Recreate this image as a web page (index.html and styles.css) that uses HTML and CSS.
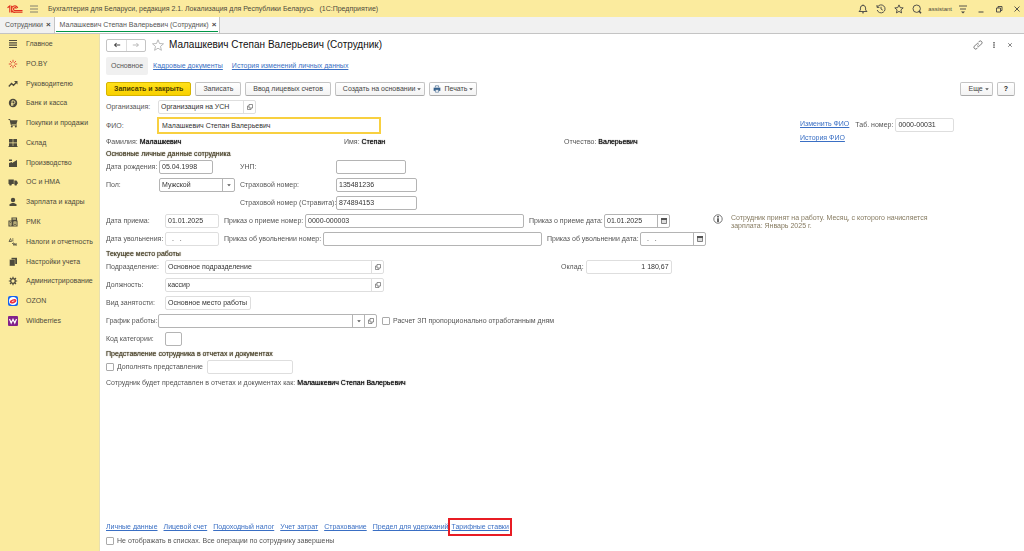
FILE: index.html
```html
<!DOCTYPE html>
<html lang="ru">
<head>
    <meta charset="utf-8" />
    <title>Бухгалтерия для Беларуси</title>
    <link rel="stylesheet" href="styles.css">
</head>
<body>
    <!-- общие иконки -->
    <svg class="sprite" aria-hidden="true">
        <symbol id="open" viewBox="0 0 8 8"><path d="M3 1.5h3.5V5H3zM3 3H1.5v3.5H5V5" fill="none" stroke="#666" stroke-width=".7"/></symbol>
        <symbol id="calendar" viewBox="0 0 8 8"><path d="M1.5 1.5h5v5h-5z" fill="#ddd" stroke="#666" stroke-width=".8"/><path d="M1 1h6v2H1z" fill="#555"/></symbol>
        <symbol id="arrow" viewBox="0 0 8 8"><path d="M2.200 3.200h3.600L4 5.200z" fill="#555"/></symbol>
    </svg>

    <header class="titlebar">
        <svg class="logo" viewBox="0 0 16 10"><path d="M.5 3.800 2.800 2v6.500M4.600 1.800v6.700M10.800 4A3.200 3.200 0 1 0 8.200 8.300h7.300M9.400 4.600A1.500 1.500 0 1 0 8.200 6.600h7.300" fill="none" stroke="#e0301e" stroke-width="1.100"/></svg>
        <button class="icon-btn menu-btn" aria-label="Меню"><svg viewBox="0 0 10 10"><path d="M1 2h8M1 5h8M1 8h8" stroke="#666" stroke-width=".8" fill="none"/></svg></button>
        <span class="app-title">Бухгалтерия для Беларуси, редакция 2.1. Локализация для Республики Беларусь &nbsp; (1С:Предприятие)</span>
        <div class="tools">
            <button class="icon-btn" aria-label="Уведомления"><svg viewBox="0 0 10 10"><path d="M1 7.5h8L7.6 6V4A2.6 2.6 0 0 0 2.4 4v2zM4 8.8h2M5 .5v1" fill="none" stroke="#444" stroke-width=".9"/></svg></button>
            <button class="icon-btn" aria-label="История"><svg viewBox="0 0 10 10"><path d="M1.5 3A4 4 0 1 1 1.2 6M1 1v2.4h2.4M5 2.8V5l1.8 1.2" fill="none" stroke="#444" stroke-width=".9"/></svg></button>
            <button class="icon-btn" aria-label="Избранное"><svg viewBox="0 0 10 10"><path d="m5 .9 1.2 2.7 3 .3-2.300 2 .7 3L5 7.400 2.400 8.900l.7-3-2.300-2 3-.3z" fill="none" stroke="#444" stroke-width=".9"/></svg></button>
            <button class="icon-btn" aria-label="Поиск"><svg viewBox="0 0 10 10"><circle cx="4.700" cy="4.700" r="3.700" fill="none" stroke="#444" stroke-width=".9"/><path d="m6.800 6.800 2.200 2.400" stroke="#444" stroke-width="1.500"/></svg></button>
            <span class="user">assistant</span>
            <button class="icon-btn" aria-label="Настройки"><svg viewBox="0 0 10 10"><path d="M1 2h8M2 5h6" stroke="#444" stroke-width=".9"/><path d="M3 7.500h4L5 9.500z" fill="#444"/></svg></button>
            <button class="icon-btn win" aria-label="Свернуть"><svg viewBox="0 0 10 10"><path d="M2.500 8h5" stroke="#444"/></svg></button>
            <button class="icon-btn win" aria-label="Восстановить"><svg viewBox="0 0 10 10"><path d="M2.500 4h4v4h-4zM4 4V2.500h4v4H6.500" fill="none" stroke="#444" stroke-width=".9"/></svg></button>
            <button class="icon-btn win" aria-label="Закрыть"><svg viewBox="0 0 10 10"><path d="m2.500 2.500 5 5m0-5-5 5" stroke="#444" stroke-width=".9"/></svg></button>
        </div>
    </header>

    <nav class="tabs">
        <div class="tab"><a href="#">Сотрудники</a><button class="tab-close" aria-label="Закрыть вкладку">×</button></div>
        <div class="tab active"><a href="#">Малашкевич Степан Валерьевич (Сотрудник)</a><button class="tab-close" aria-label="Закрыть вкладку">×</button></div>
    </nav>

    <div class="layout">
        <!-- разделы -->
        <nav class="sidebar">
            <ul>
                <li><a href="#"><svg viewBox="0 0 10 10"><path d="M1 1.500h8M1 3.800h8M1 6.200h8M1 8.500h8" stroke="#4d4a3c" stroke-width="1.200"/></svg>Главное</a></li>
                <li><a href="#"><svg viewBox="0 0 10 10"><path d="M5 .8v2.700M5 6.500v2.700M.8 5h2.700M6.500 5h2.700M2 2l1.800 1.800M8 2 6.200 3.800M2 8l1.800-1.800M8 8 6.200 6.200" stroke="#e0503a"/></svg>PO.BY</a></li>
                <li><a href="#"><svg viewBox="0 0 10 10"><path d="m.8 7.500 2.700-3 2 1.800 3-3" fill="none" stroke="#4d4a3c" stroke-width="1.300"/><path d="M6 2h3.500v3.500z" fill="#4d4a3c"/></svg>Руководителю</a></li>
                <li><a href="#"><svg viewBox="0 0 10 10"><circle cx="5" cy="5" r="4.200" fill="#4d4a3c"/><path d="M4 8V2.800h1.500a1.400 1.400 0 0 1 0 2.900H3M3 6.900h2.500" fill="none" stroke="#fbeb9e" stroke-width=".9"/></svg>Банк и касса</a></li>
                <li><a href="#"><svg viewBox="0 0 10 10"><path d="M.5 1.500H2L3.300 7H9" fill="none" stroke="#4d4a3c"/><path d="M2.300 2.300h7.200L8.500 6H3z" fill="#4d4a3c"/><circle cx="3.800" cy="8.500" r="1" fill="#4d4a3c"/><circle cx="7.800" cy="8.500" r="1" fill="#4d4a3c"/></svg>Покупки и продажи</a></li>
                <li><a href="#"><svg viewBox="0 0 10 10"><path d="M1 1h3.700v3.500H1zM5.300 1H9v3.500H5.300zM1 5.200h3.700v3.500H1zM5.300 5.200H9v3.500H5.300zM.5 8h9v1h-9z" fill="#4d4a3c"/></svg>Склад</a></li>
                <li><a href="#"><svg viewBox="0 0 10 10"><path d="M1 9V5l3-1v1l5-3v7zM1 1.500h3V3H1z" fill="#4d4a3c"/></svg>Производство</a></li>
                <li><a href="#"><svg viewBox="0 0 10 10"><path d="M.5 2.500h5.300V7H.5zM6.300 3.500H8.500L9.700 5.200V7H6.300z" fill="#4d4a3c"/><circle cx="2.500" cy="7.400" r="1.200" fill="#4d4a3c"/><circle cx="7.700" cy="7.400" r="1.200" fill="#4d4a3c"/></svg>ОС и НМА</a></li>
                <li><a href="#"><svg viewBox="0 0 10 10"><circle cx="5" cy="3" r="2.200" fill="#4d4a3c"/><path d="M1.500 9V7.300L4 6h2l2.500 1.300V9z" fill="#4d4a3c"/></svg>Зарплата и кадры</a></li>
                <li><a href="#"><svg viewBox="0 0 10 10"><path d="M1 4h3v5H1zM5 4h4v5H5zM4 1h4.500v2H4z" fill="none" stroke="#4d4a3c" stroke-width="1.100"/><path d="M2 5.500h1M2 7h1M6 6h2M6 7.500h2" stroke="#4d4a3c" stroke-width=".8"/></svg>РМК</a></li>
                <li><a href="#"><svg viewBox="0 0 10 10"><path d="M1 4.500 2.500 1.500 3.500 4.500zM4 2h1.500M4 3.800h1.500M5.500 5.500 4 7M5.500 8.500V6.500h1v2M7.500 6.500v2M9 6.500 7.800 7.500 9 8.500" fill="none" stroke="#4d4a3c" stroke-width=".8"/></svg>Налоги и отчетность</a></li>
                <li><a href="#"><svg viewBox="0 0 10 10"><path d="M3.500.8H9V7H3.500z" fill="#4d4a3c"/><path d="M1.500 2.500H7V9H1.500z" fill="#4d4a3c" stroke="#fbeb9e" stroke-width=".4"/></svg>Настройки учета</a></li>
                <li><a href="#"><svg viewBox="0 0 10 10"><circle cx="5" cy="5" r="2.300" fill="none" stroke="#4d4a3c" stroke-width="1.300"/><path d="M5 .8v1.700M5 7.500v1.700M.8 5h1.700M7.500 5h1.700M2 2l1.200 1.200M8 2 6.800 3.200M2 8l1.200-1.200M8 8 6.800 6.800" stroke="#4d4a3c" stroke-width="1.200"/></svg>Администрирование</a></li>
                <li><a href="#"><svg viewBox="0 0 10 10"><rect width="10" height="10" rx="2" fill="#1462f0"/><circle cx="5" cy="5" r="4" fill="#fff"/><ellipse cx="5" cy="5.300" rx="3.400" ry="2" fill="#ee2b3b" transform="rotate(-20 5 5)"/><path d="m3.800 5.600 2.600-.8" stroke="#fff" stroke-width=".8"/></svg>OZON</a></li>
                <li><a href="#"><svg viewBox="0 0 10 10"><rect width="10" height="10" rx="1" fill="#82218b"/><path d="m1.500 3 1.700 4L5 3.300 6.800 7l1.700-4" fill="none" stroke="#fff" stroke-width="1.200"/></svg>Wildberries</a></li>
            </ul>
        </nav>

        <main class="main">
            <div class="page-head">
                <div class="history-btns">
                    <button aria-label="Назад"><svg viewBox="0 0 10 8"><path d="M9 4H2M4.500 1.500 2 4l2.500 2.500" fill="none" stroke="#444" stroke-width="1.300"/></svg></button>
                    <button aria-label="Вперед"><svg viewBox="0 0 10 8"><path d="M1 4h7M5.500 1.500 8 4 5.500 6.500" fill="none" stroke="#aaa"/></svg></button>
                </div>
                <button class="star" aria-label="В избранное"><svg viewBox="0 0 12 12"><path d="m6 .8 1.500 3.700 4 .3-3 2.600.9 3.900L6 9.200l-3.400 2.100.9-3.900-3-2.600 4-.3z" fill="none" stroke="#aaa" stroke-width=".8"/></svg></button>
                <h1>Малашкевич Степан Валерьевич (Сотрудник)</h1>
                <div class="head-tools">
                    <button class="icon-btn" aria-label="Ссылка"><svg viewBox="0 0 10 10"><path d="M4.200 5.800a1.700 1.700 0 0 0 2.400 0l2-2a1.700 1.700 0 0 0-2.400-2.400l-1 1M5.800 4.200a1.700 1.700 0 0 0-2.400 0l-2 2a1.700 1.700 0 0 0 2.400 2.400l1-1" fill="none" stroke="#666" stroke-width=".9"/></svg></button>
                    <button class="icon-btn" aria-label="Еще действия"><svg viewBox="0 0 10 10"><path d="M5 2v1.500M5 4.300v1.500M5 6.600v1.500" stroke="#555" stroke-width="1.400"/></svg></button>
                    <button class="icon-btn" aria-label="Закрыть"><svg viewBox="0 0 10 10"><path d="m3.200 3.200 3.600 3.600m0-3.600L3.200 6.800" stroke="#777" stroke-width=".9"/></svg></button>
                </div>
            </div>

            <nav class="subnav">
                <span class="current">Основное</span>
                <a href="#">Кадровые документы</a>
                <a href="#">История изменений личных данных</a>
            </nav>

            <div class="toolbar">
                <button class="btn primary">Записать и закрыть</button>
                <button class="btn">Записать</button>
                <button class="btn">Ввод лицевых счетов</button>
                <button class="btn">Создать на основании<svg class="caret"><use href="#arrow"/></svg></button>
                <button class="btn print"><svg class="printer" viewBox="0 0 10 10"><path d="M3 3V1h4v2" fill="#fff" stroke="#4b6e93" stroke-width=".9"/><path d="M.8 3.300h8.400v4H.8z" fill="#35608c"/><path d="M3 6h4v3H3z" fill="#fff" stroke="#4b6e93" stroke-width=".8"/></svg>Печать<svg class="caret"><use href="#arrow"/></svg></button>
                <button class="btn more">Еще<svg class="caret"><use href="#arrow"/></svg></button>
                <button class="btn help">?</button>
            </div>

            <form class="form">
                <div class="row">
                    <label class="l-short" for="org">Организация:</label>
                    <div class="field w-org pale"><input id="org" value="Организация на УСН"><button type="button" aria-label="Открыть"><svg><use href="#open"/></svg></button></div>
                </div>

                <div class="person">
                    <div class="person-main">
                        <div class="row fio">
                            <label class="l-fio" for="fio">ФИО:</label>
                            <div class="field w-fio focused"><input id="fio" value="Малашкевич Степан Валерьевич"></div>
                        </div>
                        <div class="names">
                            <span>Фамилия: <b>Малашкевич</b></span>
                            <span>Имя: <b>Степан</b></span>
                            <span>Отчество: <b>Валерьевич</b></span>
                        </div>
                    </div>
                    <div class="person-links">
                        <a href="#">Изменить ФИО</a>
                        <a href="#">История ФИО</a>
                    </div>
                    <div class="row tabnum">
                        <label for="tabnum">Таб. номер:</label>
                        <div class="field w-tab pale"><input id="tabnum" value="0000-00031"></div>
                    </div>
                </div>

                <h2>Основные личные данные сотрудника</h2>
                <div class="personal">
                    <label for="birth">Дата рождения:</label>
                    <div class="field w-date"><input id="birth" value="05.04.1998"></div>
                    <label for="unp">УНП:</label>
                    <div class="field w-unp"><input id="unp"></div>

                    <label for="sex">Пол:</label>
                    <div class="field w-sex"><select id="sex"><option>Мужской</option><option>Женский</option></select><span class="drop"><svg><use href="#arrow"/></svg></span></div>
                    <label for="ins">Страховой номер:</label>
                    <div class="field w-ins"><input id="ins" value="135481236"></div>

                    <label class="third" for="strav">Страховой номер (Стравита):</label>
                    <div class="field w-ins"><input id="strav" value="874894153"></div>
                </div>

                <div class="orders">
                    <div class="rows">
                        <div class="row">
                            <label class="l-long" for="hire">Дата приема:</label>
                            <div class="field w-date pale"><input id="hire" value="01.01.2025"></div>
                            <label class="l-order" for="hire-num">Приказ о приеме номер:</label>
                            <div class="field w-wide"><input id="hire-num" value="0000-000003"></div>
                            <label class="l-order-date" for="hire-date">Приказ о приеме дата:</label>
                            <div class="field w-cal"><input id="hire-date" value="01.01.2025"><button type="button" aria-label="Календарь"><svg><use href="#calendar"/></svg></button></div>
                        </div>
                        <div class="row">
                            <label class="l-long" for="fire">Дата увольнения:</label>
                            <div class="field w-date pale"><input id="fire" value="  .   ."></div>
                            <label class="l-fire" for="fire-num">Приказ об увольнении номер:</label>
                            <div class="field w-wide"><input id="fire-num"></div>
                            <label class="l-fire-date" for="fire-date">Приказ об увольнении дата:</label>
                            <div class="field w-cal"><input id="fire-date" value="  .   ."><button type="button" aria-label="Календарь"><svg><use href="#calendar"/></svg></button></div>
                        </div>
                    </div>
                    <aside class="info">
                        <svg viewBox="0 0 10 10"><circle cx="5" cy="5" r="4.200" fill="none" stroke="#555" stroke-width=".8"/><path d="M5 2v1.400M5 4.200V8" stroke="#333" stroke-width="1.500"/></svg>
                        <p>Сотрудник принят на работу. Месяц, с которого начисляется зарплата: Январь 2025 г.</p>
                    </aside>
                </div>

                <h2>Текущее место работы</h2>
                <div class="rows">
                    <div class="row">
                        <label class="l-long" for="dept">Подразделение:</label>
                        <div class="field w-wide pale"><input id="dept" value="Основное подразделение"><button type="button" aria-label="Открыть"><svg><use href="#open"/></svg></button></div>
                        <div class="row salary">
                            <label for="salary">Оклад:</label>
                            <div class="field w-mid pale"><input id="salary" class="num" value="1 180,67"></div>
                        </div>
                    </div>
                    <div class="row">
                        <label class="l-long" for="post">Должность:</label>
                        <div class="field w-wide pale"><input id="post" value="кассир"><button type="button" aria-label="Открыть"><svg><use href="#open"/></svg></button></div>
                    </div>
                    <div class="row">
                        <label class="l-long" for="kind">Вид занятости:</label>
                        <div class="field w-mid pale"><input id="kind" value="Основное место работы"></div>
                    </div>
                    <div class="row">
                        <label class="l-short" for="schedule">График работы:</label>
                        <div class="field w-wide"><input id="schedule"><button type="button" aria-label="Выбрать"><svg><use href="#arrow"/></svg></button><button type="button" aria-label="Открыть"><svg><use href="#open"/></svg></button></div>
                        <label class="check after-field"><input type="checkbox">Расчет ЗП пропорционально отработанным дням</label>
                    </div>
                    <div class="row">
                        <label class="l-long" for="cat">Код категории:</label>
                        <div class="field w-cat"><input id="cat"></div>
                    </div>
                </div>

                <h2>Представление сотрудника в отчетах и документах</h2>
                <div class="row">
                    <label class="check l-check"><input type="checkbox">Дополнять представление</label>
                    <div class="field w-mid pale"><input aria-label="Представление"></div>
                </div>
                <p class="summary">Сотрудник будет представлен в отчетах и документах как: <b>Малашкевич Степан Валерьевич</b></p>
            </form>

            <footer class="bottom">
                <div class="links">
                    <a href="#">Личные данные</a>
                    <a href="#">Лицевой счет</a>
                    <a href="#">Подоходный налог</a>
                    <a href="#">Учет затрат</a>
                    <a href="#">Страхование</a>
                    <a href="#">Предел для удержаний</a>
                    <a class="marked" href="#">Тарифные ставки</a>
                </div>
                <label class="check"><input type="checkbox">Не отображать в списках. Все операции по сотруднику завершены</label>
            </footer>
        </main>
    </div>
    <script>
        // курсор в конец ФИО
        const fio = document.getElementById("fio");
        fio.focus();
        fio.setSelectionRange(fio.value.length, fio.value.length);
    </script>
</body>
</html>
```
FILE: styles.css
```css
* {
    box-sizing: border-box;
}

body {
    display: flex;
    flex-direction: column;
    min-height: 100vh;
    margin: 0;
    background: #fff;
    color: #555;
    font-family: "Liberation Sans", Arial, sans-serif;
    font-size: 7px;
    line-height: 8px;
}

button, input, select {
    margin: 0;
    padding: 0;
    border: none;
    background: none;
    color: inherit;
    font: inherit;
}

button {
    cursor: pointer;
}

a {
    color: #3a6fc4;
}

svg {
    display: block;
    width: 8px;
    height: 8px;
    flex-shrink: 0;
}

.sprite {
    display: none;
}

/* Заголовок окна */
.titlebar {
    display: flex;
    align-items: center;
    height: 17px;
    padding: 0 2px 0 7px;
    background: #fbeb9e;
    color: #4d4a3c;
}

.logo {
    width: 16px;
    height: 10px;
}

.icon-btn svg {
    width: 10px;
    height: 10px;
}

.menu-btn {
    margin: 0 9px 0 6px;
}

.tools {
    display: flex;
    align-items: center;
    gap: 8px;
    margin-left: auto;
}

.user {
    font-size: 6px;
    margin: 0 -2px;
}

/* Вкладки */
.tabs {
    display: flex;
    height: 17px;
    background: #f1f1f1;
    border-bottom: 1px solid #c4c4c4;
}

.tab {
    display: flex;
    align-items: center;
    gap: 3px;
    padding: 0 3px 0 5px;
    border-right: 1px solid #c4c4c4;
}

.tab a {
    color: #555;
    text-decoration: none;
}

.tab.active {
    position: relative;
    background: #fff;
}

.tab.active::after {
    content: "";
    position: absolute;
    right: 1px;
    bottom: 1px;
    left: 1px;
    height: 1px;
    background: #009646;
}

.tab-close {
    color: #444;
    font-size: 8px;
    font-weight: bold;
}

.layout {
    display: flex;
    flex: 1;
}

/* Боковая панель */
.sidebar {
    width: 100px;
    flex-shrink: 0;
    padding-top: 3px;
    background: #fbeb9e;
    border-right: 1px solid #e8e0b0;
}

.sidebar ul {
    display: flex;
    flex-direction: column;
    justify-content: space-between;
    min-height: 291px;
    margin: 0;
    padding: 0;
    list-style: none;
}

.sidebar a {
    display: flex;
    align-items: center;
    gap: 8px;
    height: 14px;
    padding-left: 8px;
    color: #4d4a3c;
    text-decoration: none;
    white-space: nowrap;
}

.sidebar svg {
    width: 10px;
    height: 10px;
}

/* Основная область */
.main {
    display: flex;
    flex: 1;
    flex-direction: column;
    min-width: 0;
    padding: 4px 9px 6px 6px;
}

.page-head {
    display: flex;
    align-items: center;
}

.history-btns {
    display: flex;
    border: 1px solid #c4c4c4;
    border-radius: 2px;
}

.history-btns button {
    display: flex;
    align-items: center;
    justify-content: center;
    width: 19px;
    height: 11px;
}

.history-btns button + button {
    border-left: 1px solid #ddd;
}

.star {
    margin: 0 5px 0 6px;
}

.star svg {
    width: 12px;
    height: 12px;
}

h1 {
    margin: 0;
    color: #111;
    font-size: 10px;
    font-weight: normal;
    line-height: 14px;
}

.head-tools {
    display: flex;
    gap: 6px;
    margin-left: auto;
}

.subnav {
    display: flex;
    align-items: center;
    gap: 9px;
    margin: 5px 0 7px;
}

.subnav .current {
    padding: 5px;
    border-radius: 2px;
    background: #f0f0f0;
}

.subnav a:first-of-type {
    margin-left: -4px;
}

.toolbar {
    display: flex;
    gap: 4px;
    margin-bottom: 4px;
}

.btn {
    display: flex;
    align-items: center;
    height: 14px;
    padding: 0 7px;
    border: 1px solid #c4c4c4;
    border-bottom-color: #aaa;
    border-radius: 2px;
    background: linear-gradient(#fff, #f3f3f3);
    color: #444;
}

.btn.primary {
    border-color: #d6b400;
    background: linear-gradient(#ffe11a, #f8d000);
    color: #4d4000;
    font-weight: bold;
}

.btn .caret {
    margin: 0 -6px 0 0;
}

.btn.print {
    padding-left: 3px;
}

.printer {
    margin-right: 3px;
}

.btn.more {
    margin-left: auto;
}

.btn.help {
    padding: 0 6px;
    color: #222;
    font-weight: bold;
}

/* Форма */
.form {
    display: flex;
    flex-direction: column;
}

.row {
    display: flex;
    align-items: center;
}

.rows {
    display: flex;
    flex-direction: column;
    gap: 4px;
}

label {
    white-space: nowrap;
}

.l-short {
    width: 52px;
}

.l-fio {
    width: 51px;
}

.l-long {
    width: 59px;
}

.l-order {
    width: 86px;
    padding-left: 5px;
}

.l-fire {
    width: 104px;
    padding-left: 5px;
}

.l-order-date {
    width: 80px;
    padding-left: 5px;
}

.l-fire-date {
    width: 98px;
    padding-left: 5px;
}

.l-check {
    width: 101px;
}

.field {
    display: flex;
    height: 14px;
    border: 1px solid #b4b4b4;
    border-radius: 2px;
    background: #fff;
    color: #333;
}

.field input,
.field select {
    flex: 1;
    min-width: 0;
    width: 100%;
    padding: 0 2px;
    outline: none;
    appearance: none;
}

.field button,
.field .drop {
    display: flex;
    align-items: center;
    justify-content: center;
    width: 12px;
    flex-shrink: 0;
    border-left: 1px solid #b4b4b4;
}

.field.pale,
.field.pale button {
    border-color: #dedede;
}

.field.focused {
    height: 17px;
    border: 2px solid #f8d040;
    border-radius: 0;
}

.field.focused input {
    padding-left: 3px;
}

.field .num {
    text-align: right;
}

.w-org { width: 98px; }
.w-fio { width: 224px; }
.w-tab { width: 59px; }
.w-date { width: 54px; }
.w-cal { width: 66px; }
.w-unp { width: 70px; }
.w-sex { width: 76px; }
.w-ins { width: 81px; }
.w-wide { width: 219px; }
.w-mid { width: 86px; }
.w-cat { width: 17px; }

.person {
    display: flex;
    align-items: flex-start;
    margin-top: 3px;
}

.person-main {
    width: 694px;
}

.names {
    display: grid;
    grid-template-columns: 238px 220px 1fr;
    margin-top: 4px;
}

/* жирность без расширения строки */
b,
h2 {
    font-weight: normal;
    text-shadow: 0 0 1px currentColor;
}

b {
    color: #111;
}

.person-links {
    display: flex;
    flex-direction: column;
    gap: 6px;
    padding-top: 3px;
}

.tabnum {
    gap: 2px;
    margin: 1px 0 0 6px;
}

h2 {
    margin: 4px 0 2px;
    color: #4f4830;
    font-size: 7px;
    line-height: 8px;
}

.personal {
    display: grid;
    grid-template-columns: 53px 81px 96px auto;
    gap: 4px 0;
    align-items: center;
    justify-content: start;
}

.personal .third {
    grid-column: 3;
}

.orders {
    display: flex;
    align-items: flex-start;
    margin-top: 4px;
}

.orders .rows {
    width: 607px;
}

.info {
    display: flex;
    gap: 8px;
    color: #857a60;
}

.info svg {
    width: 10px;
    height: 10px;
}

.info p {
    width: 204px;
    margin: 0;
}

.salary {
    gap: 2px;
    margin-left: 177px;
}

.check {
    display: flex;
    align-items: center;
    gap: 3px;
}

.check input {
    width: 8px;
    height: 8px;
    border: 1px solid #aaa;
    border-radius: 1px;
    appearance: none;
}

.after-field {
    margin-left: 5px;
}

.summary {
    margin: 5px 0;
}

/* Нижние ссылки */
.bottom {
    margin-top: auto;
}

.links {
    display: flex;
    align-items: center;
    gap: 6px;
    margin-bottom: 1px;
}

.marked {
    margin-left: -6px;
    padding: 3px 1px;
    border: 2px solid #e81c24;
}
```
